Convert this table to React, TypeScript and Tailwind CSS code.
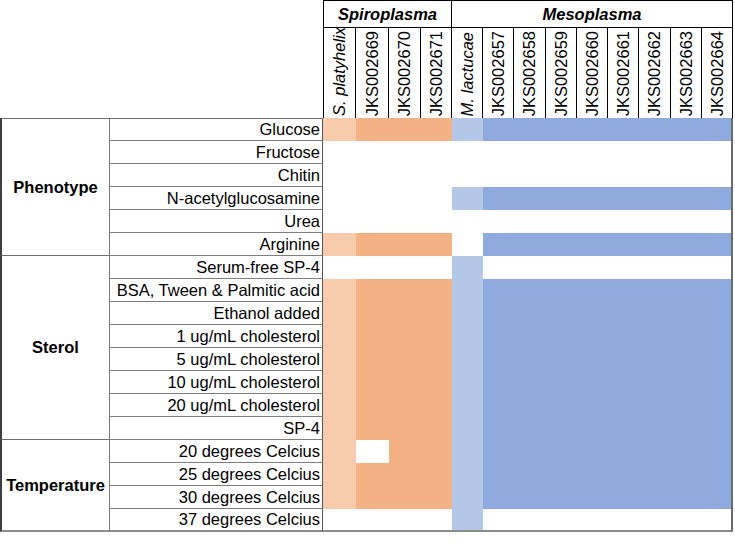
import React from "react";

const strains = [
  { name: "S. platyhelix", italic: true },
  { name: "JKS002669" },
  { name: "JKS002670" },
  { name: "JKS002671" },
  { name: "M. lactucae", italic: true },
  { name: "JKS002657" },
  { name: "JKS002658" },
  { name: "JKS002659" },
  { name: "JKS002660" },
  { name: "JKS002661" },
  { name: "JKS002662" },
  { name: "JKS002663" },
  { name: "JKS002664" },
];

// colour for a positive cell, by strain column
const fillCls = [
  "bg-[#f8cbad]",
  "bg-[#f4b183]",
  "bg-[#f4b183]",
  "bg-[#f4b183]",
  "bg-[#b4c7e7]",
  "bg-[#8faadc]",
  "bg-[#8faadc]",
  "bg-[#8faadc]",
  "bg-[#8faadc]",
  "bg-[#8faadc]",
  "bg-[#8faadc]",
  "bg-[#8faadc]",
  "bg-[#8faadc]",
];

const ALL = "1111111111111";
const NONE = "0000000000000";

const groups = [
  {
    title: "Phenotype",
    span: "row-span-6",
    rows: [
      ["Glucose", ALL],
      ["Fructose", NONE],
      ["Chitin", NONE],
      ["N-acetylglucosamine", "0000111111111"],
      ["Urea", NONE],
      ["Arginine", "1111011111111"],
    ],
  },
  {
    title: "Sterol",
    span: "row-span-8",
    rows: [
      ["Serum-free SP-4", "0000100000000"],
      ["BSA, Tween & Palmitic acid", ALL],
      ["Ethanol added", ALL],
      ["1 ug/mL cholesterol", ALL],
      ["5 ug/mL cholesterol", ALL],
      ["10 ug/mL cholesterol", ALL],
      ["20 ug/mL cholesterol", ALL],
      ["SP-4", ALL],
    ],
  },
  {
    title: "Temperature",
    span: "row-span-4",
    rows: [
      ["20 degrees Celcius", "1011111111111"],
      ["25 degrees Celcius", ALL],
      ["30 degrees Celcius", ALL],
      ["37 degrees Celcius", "0000100000000"],
    ],
  },
];

export default function App() {
  return (
    <div className="min-h-[556px] w-[735px] bg-white font-['Liberation_Sans',Arial,sans-serif] text-[16.5px] text-black">
      <div className="grid grid-cols-[110px_213px_33px_33px_32px_31px_31px_31px_32px_31px_31px_31px_32px_31px_31px] grid-rows-[28px_90px_repeat(18,23px)]">
        {/* Header */}
        <div className="col-span-2 row-span-2" />
        <div className="col-span-4 flex items-center justify-center border-x border-y border-black font-bold italic">
          Spiroplasma
        </div>
        <div className="col-span-9 flex items-center justify-center border-y border-r border-black font-bold italic">
          Mesoplasma
        </div>
        {strains.map((s, i) => (
          <div
            key={s.name}
            className={`flex items-end justify-center overflow-visible border-r border-black pb-[2px] ${i === 0 ? "border-l" : ""}`}
          >
            <span className={`rotate-180 whitespace-nowrap leading-none [writing-mode:vertical-rl] ${s.italic ? "italic" : ""}`}>
              {s.name}
            </span>
          </div>
        ))}

        {/* Body */}
        {groups.map((g, gi) =>
          g.rows.map(([label, mask], ri) => {
            const last = gi === groups.length - 1 && ri === g.rows.length - 1;
            return (
              <React.Fragment key={label}>
                {ri === 0 && (
                  <div
                    className={`${g.span} flex items-center justify-center border-l-2 border-r border-l-[#3f3f3f] border-r-[#7a7a7a] font-bold ${gi === 0 ? "border-t border-t-[#6f6f6f]" : ""} ${gi === groups.length - 1 ? "border-b-2 border-b-[#8c8c8c]" : "border-b border-b-[#6f6f6f]"}`}
                  >
                    {g.title}
                  </div>
                )}
                <div
                  className={`flex items-center justify-end whitespace-nowrap border-r border-r-[#555555] pr-[2px] ${gi === 0 && ri === 0 ? "border-t border-t-[#6f6f6f]" : ""} ${last ? "border-b-2 border-b-[#8c8c8c]" : "border-b border-b-[#7f7f7f]"}`}
                >
                  {label}
                </div>
                {mask.split("").map((m, ci) => (
                  <div
                    key={ci}
                    className={`${m === "1" ? fillCls[ci] : "bg-white"} ${ci === 12 ? "border-r-2 border-r-[#6a6a6a]" : ""} ${last ? "border-b-2 border-b-[#8c8c8c]" : ""}`}
                  />
                ))}
              </React.Fragment>
            );
          })
        )}
      </div>
    </div>
  );
}
